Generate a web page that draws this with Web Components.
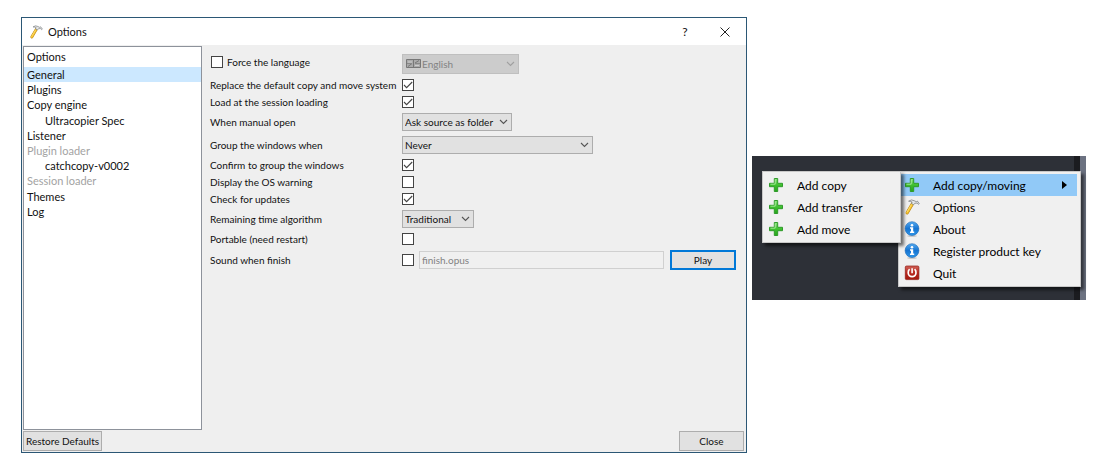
<!DOCTYPE html>
<html lang="en">
<head>
<meta charset="utf-8">
<title>Options</title>
<style>
  body { margin: 0; background: #fff; }
</style>
</head>
<body>
<options-page>
  <options-dialog slot="dialog">
    <section-tree slot="tree">
      <tree-entry selected>General</tree-entry>
      <tree-entry>Plugins</tree-entry>
      <tree-entry>Copy engine</tree-entry>
      <tree-entry child>Ultracopier Spec</tree-entry>
      <tree-entry>Listener</tree-entry>
      <tree-entry disabled>Plugin loader</tree-entry>
      <tree-entry child>catchcopy-v0002</tree-entry>
      <tree-entry disabled>Session loader</tree-entry>
      <tree-entry>Themes</tree-entry>
      <tree-entry>Log</tree-entry>
    </section-tree>
    <language-row>Force the language</language-row>
    <check-row checked>Replace the default copy and move system</check-row>
    <check-row checked>Load at the session loading</check-row>
    <choice-row width="110" choices="Ask source as folder|Folder|Files">When manual open</choice-row>
    <choice-row width="191" choices="Never|When source is same|Always">Group the windows when</choice-row>
    <check-row checked>Confirm to group the windows</check-row>
    <check-row>Display the OS warning</check-row>
    <check-row checked>Check for updates</check-row>
    <choice-row width="72" choices="Traditional|Logarithmic">Remaining time algorithm</choice-row>
    <check-row>Portable (need restart)</check-row>
    <sound-row file="finish.opus">Sound when finish</sound-row>
  </options-dialog>
  <tray-area slot="tray">
    <popup-menu label="Ultracopier">
      <menu-entry icon="add" active>Add copy/moving
        <popup-menu slot="submenu" label="Add copy/moving">
          <menu-entry icon="add">Add copy</menu-entry>
          <menu-entry icon="add">Add transfer</menu-entry>
          <menu-entry icon="add">Add move</menu-entry>
        </popup-menu>
      </menu-entry>
      <menu-entry icon="tools">Options</menu-entry>
      <menu-entry icon="info">About</menu-entry>
      <menu-entry icon="info">Register product key</menu-entry>
      <menu-entry icon="quit">Quit</menu-entry>
    </popup-menu>
  </tray-area>
</options-page>

<script>
const UI = 'Lato, "Open Sans", sans-serif';

const controls = `
  * { box-sizing: border-box; }
  input, select, button { font: inherit; margin: 0; border-radius: 0; }
  input[type=checkbox] {
    appearance: none; display: block; flex: none; width: 12px; height: 12px;
    border: 1px solid #444; background: #fff;
  }
  input[type=checkbox]:checked {
    background: #fff url("data:image/svg+xml,%3Csvg xmlns='http://www.w3.org/2000/svg' viewBox='0 0 10 10'%3E%3Cpath d='M1 5l2.6 2.7L9.2 2' fill='none' stroke='%23444' stroke-width='1.1'/%3E%3C/svg%3E");
  }
  select {
    appearance: none; display: block; height: 18px; padding: 0 16px 0 2px;
    border: 1px solid #adadad; color: #111;
    background: #e1e1e1 url("data:image/svg+xml,%3Csvg xmlns='http://www.w3.org/2000/svg' width='9' height='6' viewBox='0 0 9 6'%3E%3Cpath d='M1 1l3.5 3.5L8 1' fill='none' stroke='%23555' stroke-width='1.1'/%3E%3C/svg%3E") no-repeat right 3px center;
  }
  button { border: 1px solid #adadad; background: #e1e1e1; color: #111; padding: 0; }
`;
const row = `
  :host { display: grid; grid-template-columns: 187px minmax(0, 1fr); column-gap: 5px; align-items: center; }
  label { white-space: nowrap; line-height: 12px; }
`;

function define(name, css, html, setup) {
  customElements.define(name, class extends HTMLElement {
    connectedCallback() {
      if (this.shadowRoot) return;
      const root = this.attachShadow({ mode: 'open' });
      root.innerHTML = `<style>${css}</style>${typeof html === 'function' ? html(this) : html}`;
      if (setup) setup(this, root);
    }
  });
}

const icons = {
  add: `<defs><linearGradient id="g" x1="0" y1="0" x2="0" y2="1"><stop offset="0" stop-color="#8be37c"/><stop offset=".5" stop-color="#3fc02f"/><stop offset="1" stop-color="#27a51c"/></linearGradient></defs>
    <path d="M6.300 1.500h3.400v4.800h4.800v3.400H9.700v4.800H6.300V9.700H1.500V6.300h4.800z" fill="url(#g)" stroke="#2f9a2a" stroke-width="1" stroke-linejoin="round"/><path d="M7.200 2.500v4.700H2.500" fill="none" stroke="#b5efab" stroke-width=".8"/>`,
  tools: `<path d="M8.300 5L3.200 13.800" stroke="#b67f0c" stroke-width="3.200" stroke-linecap="round"/>
    <path d="M8 5.400L3.200 13.700" stroke="#f5c432" stroke-width="2.200" stroke-linecap="round"/>
    <path d="M7.500 5.600L3 13.100" stroke="#ffe68a" stroke-width=".7"/>
    <path d="M4.600 2.200Q7.500-.1 10.200 1.700L12.300 2.700l1-.7 2 2.700-.9.600-1.300-1.200-2.200.1-1.300 1.600-2.100-1.300.6-1.500Q6.500 2.200 4.600 2.200z" fill="#e4e6e7" stroke="#73777a" stroke-width=".7"/>`,
  info: `<defs><linearGradient id="g" x1="0" y1="0" x2="0" y2="1"><stop offset="0" stop-color="#55aaf0"/><stop offset=".5" stop-color="#1674d1"/><stop offset="1" stop-color="#2f96e8"/></linearGradient></defs>
    <ellipse cx="8" cy="15" rx="5" ry=".8" fill="#bbb"/><circle cx="8" cy="7.600" r="6.900" fill="url(#g)" stroke="#1766b5" stroke-width=".6"/>
    <circle cx="8" cy="4.200" r="1.300" fill="#fff"/><path d="M6 6.300h3.200v4.300h1v1.400H6v-1.400h1V7.700H6z" fill="#fff"/>`,
  quit: `<defs><linearGradient id="g" x1="0" y1="0" x2="0" y2="1"><stop offset="0" stop-color="#cf6157"/><stop offset=".5" stop-color="#b82920"/><stop offset="1" stop-color="#a3180f"/></linearGradient></defs>
    <rect x="1.300" y="1" width="13.600" height="13.600" rx="1.200" fill="url(#g)" stroke="#8f1a13" stroke-width=".7"/>
    <path d="M5.600 4.200Q4 5.600 4.200 7.800a3.900 3.900 0 0 0 7.800 0Q12.200 5.600 10.600 4.200" fill="none" stroke="#fff" stroke-width="1.700"/><path d="M8.100 3.300v5" stroke="#fff" stroke-width="1.600"/>`
};

define('app-icon', `:host { display: block; width: 16px; height: 16px; flex: none; } svg { display: block; width: 100%; height: 100%; }`,
  el => `<svg viewBox="0 0 16 16" fill="none" aria-hidden="true">${icons[el.getAttribute('name')]}</svg>`);

define('options-page', `
  :host {
    box-sizing: border-box; min-height: 100vh; padding: 17px 24px 17px 21px;
    display: grid; grid-template-columns: minmax(0, 726fr) minmax(0, 334fr); column-gap: 5px;
    font: 12px/16px ${UI}; color: #111;
  }
  slot { display: contents; }`,
  `<slot name="dialog"></slot><slot name="tray"></slot>`);

define('options-dialog', controls + `
  :host { display: flex; flex-direction: column; border: 1px solid #2b5775; background: #efefef; font-size: 11px; }
  header { display: flex; align-items: center; height: 27px; background: #fff; padding: 0 1px 0 7px; }
  app-icon { width: 14px; height: 14px; }
  h1 { flex: 1; margin: 0 0 0 5px; font: inherit; }
  header button { width: 40px; height: 27px; border: 0; background: none; font-size: 12px; display: grid; place-items: center; }
  main { flex: 1; display: grid; grid-template-columns: 179px minmax(0, 1fr); padding: 1px 0 0 1px; }
  .form { display: flex; flex-direction: column; gap: 5px; padding: 8px 10px 8px 8px; font-size: 10px; line-height: 12px; }
  footer { display: flex; justify-content: space-between; padding: 1px 2px 1px 1px; font-size: 10px; line-height: 12px; }
  footer button { height: 20px; min-width: 65px; padding: 0 2px; }
  footer button:first-child { min-width: 79px; }`,
  `<header><app-icon name="tools"></app-icon><h1>Options</h1>
    <button aria-label="Help">?</button>
    <button aria-label="Close window"><svg width="10" height="10" viewBox="0 0 10 10"><path d="M.5.5l9 9M9.500.5l-9 9" stroke="#222"/></svg></button>
  </header>
  <main><slot name="tree"></slot><div class="form"><slot></slot></div></main>
  <footer><button>Restore Defaults</button><button>Close</button></footer>`);

define('section-tree', `
  :host { display: block; border: 1px solid #8d929b; background: #fff; }
  h2 { margin: 0; padding: 2px 3px; font: inherit; }
  .items { display: grid; grid-template-rows: repeat(10, 1fr); height: 152px; }`,
  `<h2>Options</h2><div class="items" role="tree" aria-label="Options"><slot></slot></div>`);

define('tree-entry', `
  :host { display: flex; align-items: center; padding-left: 3px; line-height: 15px; white-space: nowrap; }
  :host([child]) { padding-left: 21px; }
  :host([selected]) { background: #cce8ff; }
  :host([disabled]) { color: #a3a3a3; }`,
  `<slot></slot>`, el => {
    el.setAttribute('role', 'treeitem');
    if (el.hasAttribute('selected')) el.setAttribute('aria-selected', 'true');
    if (el.hasAttribute('disabled')) el.setAttribute('aria-disabled', 'true');
  });

define('check-row', controls + row,
  el => `<label for="c"><slot></slot></label><input type="checkbox" id="c"${el.hasAttribute('checked') ? ' checked' : ''}>`);

define('choice-row', controls + row,
  el => `<label for="c"><slot></slot></label><select id="c">${el.getAttribute('choices').split('|').map(t => `<option>${t}</option>`).join('')}</select>`,
  (el, root) => { root.querySelector('select').style.width = el.getAttribute('width') + 'px'; });

define('language-row', controls + row + `
  .force { display: flex; align-items: center; gap: 4px; padding-left: 1px; margin-bottom: 4px; }
  .language { position: relative; }
  select, select:disabled { width: 117px; height: 20px; padding-left: 19px; border-color: #bfbfbf; color: #838383; opacity: 1;
    background-color: #ccc; background-image: url("data:image/svg+xml,%3Csvg xmlns='http://www.w3.org/2000/svg' width='9' height='6' viewBox='0 0 9 6'%3E%3Cpath d='M1 1l3.5 3.5L8 1' fill='none' stroke='%23a0a0a0' stroke-width='1.1'/%3E%3C/svg%3E"); }
  .flag { position: absolute; left: 4px; top: 5px; }`,
  `<div class="force"><input type="checkbox" id="f"><label for="f"><slot></slot></label></div>
  <div class="language"><select disabled aria-label="Language"><option>English</option></select>
    <svg class="flag" width="15" height="10" viewBox="0 0 15 10" aria-hidden="true"><path d="M.5.5h14v8H.5z" fill="#aaa" stroke="#777"/><path d="M2 7.500l4-3M9 4l4-2.500M7.500 1v7" stroke="#777"/><path d="M2 3h4M9 6.500h4" stroke="#ccc"/><path d="M1 4.500h5M9 4.500h5" stroke="#888"/></svg></div>`);

define('sound-row', controls + row + `
  .controls { display: flex; align-items: center; }
  input[type=text] { flex: 1; min-width: 0; height: 18px; margin: 0 6px 0 5px; padding: 0 2px; border: 1px solid #d0d0d0; background: #f0f0f0; color: #838383; }
  button { width: 66px; height: 20px; border: 2px solid #0078d7; }`,
  el => `<label for="c"><slot></slot></label><div class="controls"><input type="checkbox" id="c">
    <input type="text" disabled aria-label="Sound file" value="${el.getAttribute('file')}"><button>Play</button></div>`);

define('tray-area', `
  :host {
    align-self: center; display: flex; justify-content: flex-end; margin-bottom: 14px; padding: 15px 5px 13px;
    background: linear-gradient(to left, #6c7281 6px, #1b1c20 6px, #1b1c20 12px, #2d3037 12px);
  }`, `<slot></slot>`);

define('popup-menu', `
  :host { display: block; box-sizing: border-box; width: 183px; padding: 2px 3px 2px 2px; border: 1px solid #c8c8c8; background: #f0f0f0; box-shadow: 3px 3px 3px rgba(0, 0, 0, .55); }
  :host([slot=submenu]) { position: absolute; right: 100%; top: -3px; width: 139px; }`,
  `<slot></slot>`, el => {
    el.setAttribute('role', 'menu');
    el.setAttribute('aria-label', el.getAttribute('label'));
  });

define('menu-entry', `
  :host { display: block; position: relative; }
  button { display: flex; align-items: center; gap: 13px; width: 100%; height: 22px; margin: 0; padding: 0 10px 0 3px; border: 0; background: none; font: inherit; color: #000; text-align: left; white-space: nowrap; }
  :host([active]) button { background: #91c9f7; }
  span { flex: 1; padding-top: 1px; }`,
  el => `<button role="menuitem"><app-icon name="${el.getAttribute('icon')}"></app-icon><span><slot></slot></span>${el.hasAttribute('active')
    ? '<svg width="5" height="8" viewBox="0 0 5 8" aria-hidden="true"><path d="M0 0l5 4-5 4z"/></svg>' : ''}</button><slot name="submenu"></slot>`);
</script>
</body>
</html>
